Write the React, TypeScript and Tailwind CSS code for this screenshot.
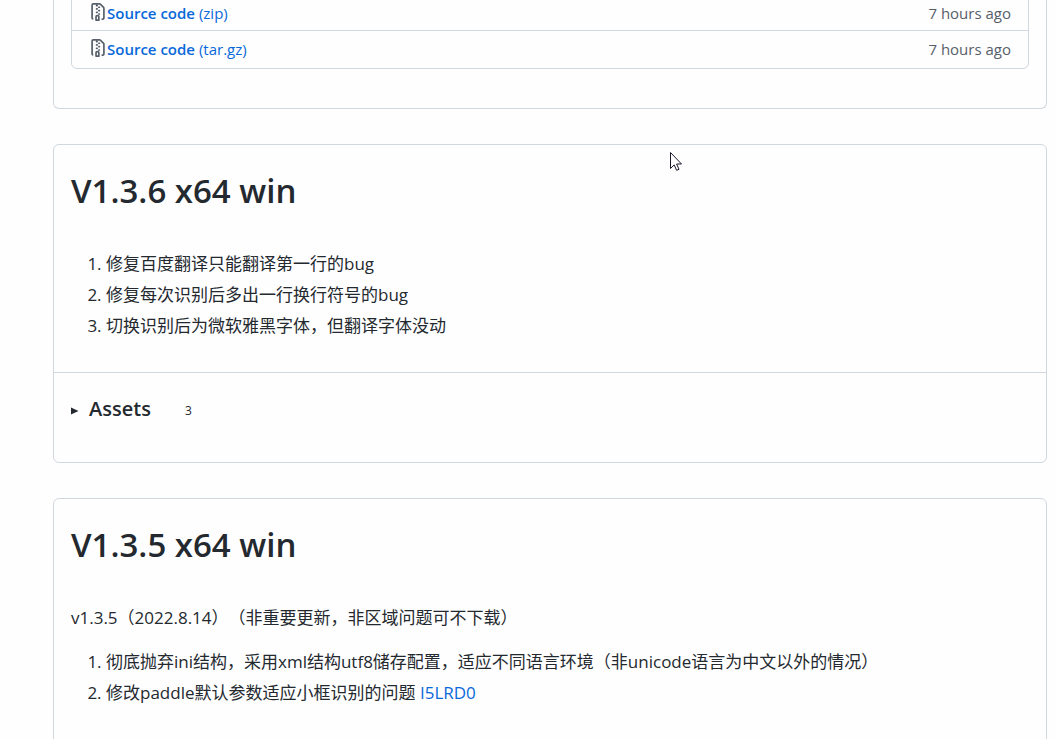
import React from 'react'

const sourceFiles = [
  { name: 'Source code', ext: '(zip)', date: '7 hours ago' },
  { name: 'Source code', ext: '(tar.gz)', date: '7 hours ago' },
]

const FileZipIcon = () => (
  <svg viewBox="0 0 16 16" className="-mt-1 h-[18px] w-[18px] text-[#57606a]" fill="currentColor" fillRule="evenodd" aria-hidden="true">
    <path d="M3.5 1.75a.25.25 0 01.25-.25h3a.75.75 0 000 1.5h.5a.75.75 0 000-1.5h2.086a.25.25 0 01.177.073l2.914 2.914a.25.25 0 01.073.177v8.586a.25.25 0 01-.25.25h-.5a.75.75 0 000 1.5h.5A1.75 1.75 0 0014 13.25V4.664c0-.464-.184-.909-.513-1.237L10.573.513A1.75 1.75 0 009.336 0H3.75A1.75 1.75 0 002 1.75v11.5c0 .649.353 1.214.874 1.515a.75.75 0 10.752-1.298.25.25 0 01-.126-.217V1.75zM8.75 3a.75.75 0 000 1.5h.5a.75.75 0 000-1.5h-.5zM6 5.25a.75.75 0 01.75-.75h.5a.75.75 0 010 1.5h-.5A.75.75 0 016 5.25zm2 1.5A.75.75 0 018.75 6h.5a.75.75 0 010 1.5h-.5A.75.75 0 018 6.75zm-1.25.75a.75.75 0 000 1.5h.5a.75.75 0 000-1.5h-.5zM8 9.75A.75.75 0 018.75 9h.5a.75.75 0 010 1.5h-.5A.75.75 0 018 9.75zm-.75.75a1.75 1.75 0 00-1.75 1.75v3c0 .414.336.75.75.75h2.5a.75.75 0 00.75-.75v-3a1.75 1.75 0 00-1.75-1.75h-.5zM7 12.25a.25.25 0 01.25-.25h.5a.25.25 0 01.25.25v2.25H7v-2.25z" />
  </svg>
)

const SourceRow = ({ name, ext, date }: { name: string; ext: string; date: string }) => (
  <li className="flex items-center justify-between border-b border-[#d0d7de] px-[17px] pt-2 pb-1.5 text-[15px] leading-[21px] last:border-b-0 last:pb-2">
    <a href="#" className="flex items-center text-[#0969da]">
      <FileZipIcon />
      <span>
        <span className="font-semibold">{name}</span> {ext}
      </span>
    </a>
    <span className="text-[#57606a]">{date}</span>
  </li>
)

type ReleaseCardProps = {
  title: string
  assets?: number
  children: React.ReactNode
}

const ReleaseCard = ({ title, assets, children }: ReleaseCardProps) => (
  <section className="mt-[35px] rounded-md border border-[#d0d7de]">
    <div className="px-[17px] pt-5 pb-[33px]">
      <h1 className="mb-[34px] text-[33px] leading-[52px] font-semibold">{title}</h1>
      {children}
    </div>
    {assets !== undefined && (
      <details className="border-t border-[#d0d7de] px-[17px] pt-5 pb-[37px]">
        <summary className="flex h-8 cursor-pointer list-none items-center">
          <svg viewBox="0 0 8 8" className="mt-1 h-2 w-2" aria-hidden="true">
            <path d="M0 0.5L7.5 4L0 7.5Z" fill="currentColor" />
          </svg>
          <span className="ml-2.5 text-[20px] font-semibold">Assets</span>
          <span className="mt-1 ml-[34px] text-[12px]">{assets}</span>
        </summary>
      </details>
    )}
  </section>
)

const App = () => {
  return (
    <div className="relative h-screen overflow-hidden bg-[#fefefe] font-['Open_Sans','Noto_Sans_CJK_SC',sans-serif] text-[17px] leading-[26px] text-[#24292f] [text-spacing-trim:space-all]">
      <main className="-mt-[6px] mr-[9px] ml-[53px]">
        {/* end of the latest release, scrolled past the top */}
        <section className="rounded-b-md border border-t-0 border-[#d0d7de] px-[17px] pb-[39px]">
          <ul className="rounded-b-md border border-[#d0d7de]">
            {sourceFiles.map((file) => (
              <SourceRow key={file.ext} {...file} />
            ))}
          </ul>
        </section>

        <ReleaseCard title="V1.3.6 x64 win" assets={3}>
          <ol className="list-decimal space-y-[5px] pl-[35px]">
            <li>修复百度翻译只能翻译第一行的bug</li>
            <li>修复每次识别后多出一行换行符号的bug</li>
            <li>切换识别后为微软雅黑字体，但翻译字体没动</li>
          </ol>
        </ReleaseCard>

        <ReleaseCard title="V1.3.5 x64 win">
          <p className="mb-[18px]">v1.3.5（2022.8.14）（非重要更新，非区域问题可不下载）</p>
          <ol className="list-decimal space-y-[5px] pb-10 pl-[35px]">
            <li>彻底抛弃ini结构，采用xml结构utf8储存配置，适应不同语言环境（非unicode语言为中文以外的情况）</li>
            <li>
              修改paddle默认参数适应小框识别的问题{' '}
              <a href="#" className="text-[#0969da]">I5LRD0</a>
            </li>
          </ol>
        </ReleaseCard>
      </main>

      {/* mouse pointer */}
      <svg viewBox="0 0 12 19" className="absolute top-[152px] left-[670px] h-[19px] w-3" aria-hidden="true">
        <path
          d="M0.5 0.5V16.5L4.2 12.9L6.6 18.3L9 17.3L6.6 12H11.5Z"
          fill="#fff"
          stroke="#1a1a2e"
        />
      </svg>
    </div>
  )
}

export default App
